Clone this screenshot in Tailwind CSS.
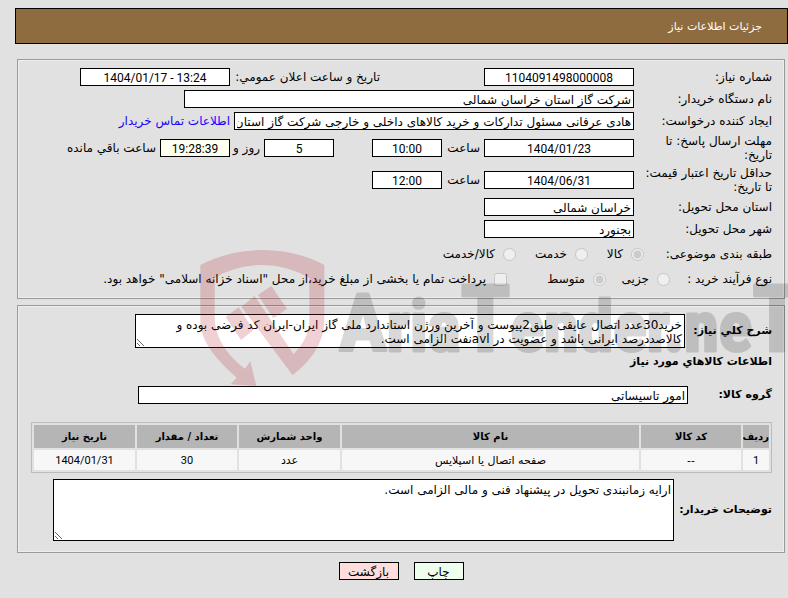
<!DOCTYPE html>
<html lang="fa" dir="rtl">
<head>
  <meta charset="UTF-8" />
  <meta name="viewport" content="width=device-width, initial-scale=1.0" />
  <title>جزئیات اطلاعات نیاز</title>
  <script src="https://cdn.jsdelivr.net/npm/@tailwindcss/browser@4"></script>
</head>
<body class="relative bg-[#e1e1e1] text-black font-['DejaVu_Sans',sans-serif] text-[12px] leading-[14px] pt-2 overflow-x-hidden">

  <header class="h-9 ml-[15px] pt-[2px] pr-[25px] flex items-center border border-black bg-[#8f6c40] text-white">
    <h1 class="text-[11px]">جزئیات اطلاعات نیاز</h1>
  </header>

  <form class="ml-[17px] mr-[3px] mt-[15px]">

    <!-- مشخصات نیاز -->
    <section class="border border-[#9a9a9a] outline outline-[#eeeeee] -outline-offset-2 h-60 pt-2 px-3 flex flex-col gap-1">
      <div class="flex items-center h-[18px]">
        <label for="shomare" class="w-[138px] shrink-0">شماره نیاز:</label>
        <input id="shomare" type="text" readonly value="1104091498000008" class="w-[150px] h-[18px] pt-px border border-black bg-white text-center font-['Roboto',sans-serif]" />
        <label for="tarikh-elan" class="w-[150px] mr-[104px] shrink-0">تاریخ و ساعت اعلان عمومي:</label>
        <input id="tarikh-elan" type="text" readonly dir="ltr" value="1404/01/17 - 13:24" class="w-[150px] h-[18px] pt-px border border-black bg-white text-center font-['Roboto',sans-serif]" />
      </div>

      <div class="flex items-center h-[18px]">
        <label for="dastgah" class="w-[138px] shrink-0">نام دستگاه خریدار:</label>
        <input id="dastgah" type="text" readonly value="شرکت گاز استان خراسان شمالی" class="w-[450px] h-[18px] pt-px px-[2px] border border-black bg-white" />
      </div>

      <div class="flex items-center h-[18px]">
        <label for="ijad" class="w-[138px] shrink-0">ایجاد کننده درخواست:</label>
        <input id="ijad" type="text" readonly value="هادی عرفانی مسئول تدارکات و خرید کالاهای داخلی و خارجی شرکت گاز استان خراسان شمالی" class="w-[400px] h-[18px] pt-px px-[2px] border border-black bg-white" />
        <a href="#" class="mr-1 text-[#2000ff] whitespace-nowrap">اطلاعات تماس خریدار</a>
      </div>

      <div class="flex items-center h-7">
        <label for="mohlat" class="w-[138px] pl-4 shrink-0">مهلت ارسال پاسخ: تا تاریخ:</label>
        <input id="mohlat" type="text" readonly dir="ltr" value="1404/01/23" class="w-[150px] h-[18px] pt-px border border-black bg-white text-center font-['Roboto',sans-serif]" />
        <label for="mohlat-saat" class="w-[42px] pr-1">ساعت</label>
        <input id="mohlat-saat" type="text" readonly value="10:00" class="w-[70px] h-[18px] pt-px border border-black bg-white text-center font-['Roboto',sans-serif]" />
        <input type="text" readonly aria-label="روز" value="5" class="w-[70px] h-[18px] pt-px mr-[38px] border border-black bg-white text-center font-['Roboto',sans-serif]" />
        <span class="w-[34px] pr-1 whitespace-nowrap">روز و</span>
        <input id="baghi" type="text" readonly value="19:28:39" class="w-[70px] h-[18px] pt-px border border-black bg-[#fffff0] text-center font-['Roboto',sans-serif]" />
        <label for="baghi" class="mr-1 whitespace-nowrap">ساعت باقي مانده</label>
      </div>

      <div class="flex items-center h-7">
        <label for="etebar" class="w-[138px] pl-1 shrink-0">حداقل تاریخ اعتبار قیمت: تا تاریخ:</label>
        <input id="etebar" type="text" readonly dir="ltr" value="1404/06/31" class="w-[150px] h-[18px] pt-px border border-black bg-white text-center font-['Roboto',sans-serif]" />
        <label for="etebar-saat" class="w-[42px] pr-1">ساعت</label>
        <input id="etebar-saat" type="text" readonly value="12:00" class="w-[70px] h-[18px] pt-px border border-black bg-white text-center font-['Roboto',sans-serif]" />
      </div>

      <div class="flex items-center h-[18px]">
        <label for="ostan" class="w-[138px] shrink-0">استان محل تحویل:</label>
        <input id="ostan" type="text" readonly value="خراسان شمالی" class="w-[150px] h-[18px] pt-px px-[2px] border border-black bg-white" />
      </div>

      <div class="flex items-center h-[18px]">
        <label for="shahr" class="w-[138px] shrink-0">شهر محل تحویل:</label>
        <input id="shahr" type="text" readonly value="بجنورد" class="w-[150px] h-[18px] pt-px px-[2px] border border-black bg-white" />
      </div>

      <div class="flex items-center h-6">
        <span class="w-32 shrink-0">طبقه بندی موضوعی:</span>
        <label class="w-14 flex items-center gap-2"><input type="radio" name="tabaghe" disabled checked class="w-[13px] h-[13px]" />کالا</label>
        <label class="w-[72px] flex items-center gap-2"><input type="radio" name="tabaghe" disabled class="w-[13px] h-[13px]" />خدمت</label>
        <label class="flex items-center gap-2"><input type="radio" name="tabaghe" disabled class="w-[13px] h-[13px]" />کالا/خدمت</label>
      </div>

      <div class="flex items-center h-[18px]">
        <span class="w-[102px] shrink-0">نوع فرآیند خرید :</span>
        <label class="w-16 flex items-center gap-2"><input type="radio" name="farayand" disabled class="w-[13px] h-[13px]" />جزیی</label>
        <label class="w-[99px] flex items-center gap-2"><input type="radio" name="farayand" disabled checked class="w-[13px] h-[13px]" />متوسط</label>
        <label class="flex items-center gap-2 whitespace-nowrap"><input type="checkbox" disabled class="w-[13px] h-[13px]" />پرداخت تمام یا بخشی از مبلغ خرید،از محل "اسناد خزانه اسلامی" خواهد بود.</label>
      </div>
    </section>

    <!-- شرح و کالاها -->
    <section class="mt-[6px] border border-[#9a9a9a] outline outline-[#eeeeee] -outline-offset-2 pt-2 pb-[11px] px-3">
      <div class="flex items-center">
        <label for="sharh" class="w-[87px] shrink-0 font-bold text-[11px]">شرح کلي نیاز:</label>
        <textarea id="sharh" readonly class="w-[550px] h-[34px] px-[2px] pt-[3px] border border-black bg-white">خرید30عدد اتصال عایقی طبق2پیوست و آخرین ورژن استاندارد ملی گاز ایران-ایران کد فرضی بوده و کالاصددرصد ایرانی باشد و عضویت در avlنفت الزامی است.</textarea>
      </div>

      <h2 class="mt-[7px] font-bold text-[11px]">اطلاعات کالاهاي مورد نیاز</h2>

      <div class="mt-[17px] flex items-center">
        <label for="gorooh" class="w-[84px] shrink-0 font-bold text-[11px]">گروه کالا:</label>
        <input id="gorooh" type="text" readonly value="امور تاسیساتی" class="w-[550px] h-[18px] pt-px px-[2px] border border-black bg-white" />
      </div>

      <div class="mt-[18px] ml-[1px]">
        <table class="w-full table-fixed border border-[#bcbcbc] border-separate border-spacing-[2px] text-center text-[11px]">
          <thead>
            <tr class="h-[23px] bg-[#b5b5b5] text-[10px]">
              <th class="w-[26px] whitespace-nowrap">ردیف</th>
              <th class="w-[100px]">کد کالا</th>
              <th>نام کالا</th>
              <th class="w-[101px]">واحد شمارش</th>
              <th class="w-[100px]">تعداد / مقدار</th>
              <th class="w-[101px]">تاریخ نیاز</th>
            </tr>
          </thead>
          <tbody>
            <tr class="h-5 bg-[#f7f7f7]">
              <td class="pt-[2px] font-['Roboto',sans-serif]">1</td>
              <td class="pt-[2px]">--</td>
              <td class="pt-[2px]">صفحه اتصال یا اسپلایس</td>
              <td class="pt-[2px]">عدد</td>
              <td class="pt-[2px] font-['Roboto',sans-serif]">30</td>
              <td class="pt-[2px] font-['Roboto',sans-serif]">1404/01/31</td>
            </tr>
          </tbody>
        </table>
      </div>

      <div class="mt-[6px] flex items-center">
        <label for="tozihat" class="w-[98px] shrink-0 font-bold text-[11px]">توضیحات خریدار:</label>
        <textarea id="tozihat" readonly class="w-[621px] h-[62px] px-[2px] pt-[3px] border border-black bg-white">ارایه زمانبندی تحویل در پیشنهاد فنی و مالی الزامی است.</textarea>
      </div>
    </section>

    <div class="mt-[9px] flex justify-center gap-[15px]">
      <button type="button" class="w-[50px] h-[18px] pt-px border border-black bg-[#eeffee]">چاپ</button>
      <button type="button" class="w-[60px] h-[18px] pt-px border border-black bg-[#ffdddd]">بازگشت</button>
    </div>
  </form>

  <!-- نشان سایت روی صفحه -->
  <svg class="absolute left-[200px] top-[250px] w-[588px] h-[137px] pointer-events-none" viewBox="0 0 588 137" direction="ltr" aria-hidden="true">
    <g transform="scale(.3333) translate(-30 -30)" fill="#af1423" fill-opacity=".2">
      <path d="M31 75Q120 30 217 30Q320 30 403 75V235C403 310 365 360 308 406L154 200L194 168L311 343C345 305 358 280 358 235V113Q290 75 217 75Q140 75 74 113V230C74 290 110 345 165 386L181 364L199 438L122 433L140 413C70 350 31 300 31 240Z" />
      <path d="M107 231L146 202L190 270L153 300Z" />
      <path d="M204 165L244 138L291 206L250 235Z" />
    </g>
    <g opacity=".15" font-family="'Roboto Condensed', sans-serif" font-weight="700" stroke="#000" stroke-width="3" stroke-linejoin="round">
      <text x="139" y="101" font-size="70"><tspan font-size="80">A</tspan>ria<tspan font-size="92">T</tspan>ender.ne<tspan font-size="92">T</tspan></text>
    </g>
  </svg>

</body>
</html>
